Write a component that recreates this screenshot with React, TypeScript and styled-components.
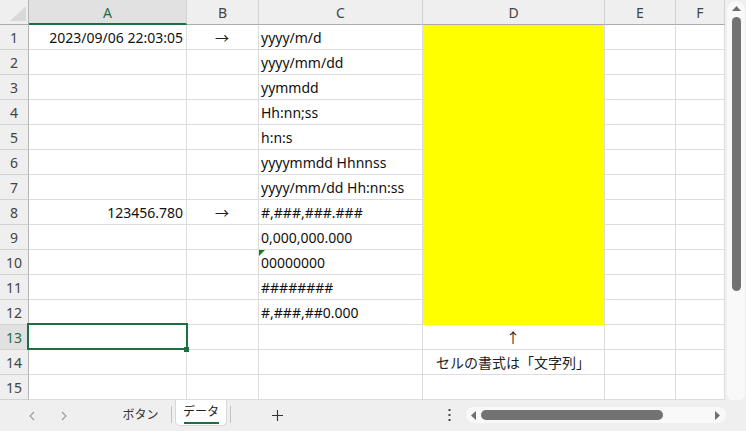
import React from 'react';
import styled, { createGlobalStyle } from 'styled-components';

const GlobalStyle = createGlobalStyle`
  html, body { margin: 0; padding: 0; background: #ffffff; }
  body { font-family: "Noto Sans", "Noto Sans CJK JP", sans-serif; }
  #root { width: 746px; height: 431px; overflow: hidden; }
`;

const GREEN = '#1e6e42';
const GRID = '#dcdcdc';
const YELLOW = '#ffff00';

const Window = styled.div`
  width: 746px;
  height: 431px;
  display: flex;
  flex-direction: column;
  background: #efefef;
  overflow: hidden;
`;

const Main = styled.div`
  display: flex;
  height: 400px;
`;

const Sheet = styled.div`
  position: relative;
  display: grid;
  grid-template-columns: 29px 158px 72px 164px 182px 71px 49px;
  grid-auto-rows: 25px;
  width: 725px;
  height: 400px;
  background: #ffffff;
  overflow: hidden;
`;

const Corner = styled.div`
  box-sizing: border-box;
  background: #efefef;
  border-right: 1px solid #b4b4b4;
  border-bottom: 1px solid #ababab;
  display: flex;
  justify-content: flex-end;
  align-items: flex-end;
  padding: 0 2px 3px 0;
`;

const ColHead = styled.div<{ $active?: boolean }>`
  box-sizing: border-box;
  background: ${p => (p.$active ? '#e1e1e1' : '#efefef')};
  color: ${p => (p.$active ? GREEN : '#444444')};
  border-right: 1px solid #d2d2d2;
  border-bottom: ${p => (p.$active ? `2px solid ${GREEN}` : '1px solid #ababab')};
  display: flex;
  align-items: center;
  justify-content: center;
  font-size: 14px;
  padding-top: ${p => (p.$active ? '1px' : '0')};
`;

const RowHead = styled.div<{ $active?: boolean }>`
  box-sizing: border-box;
  background: ${p => (p.$active ? '#e1e1e1' : '#efefef')};
  color: ${p => (p.$active ? GREEN : '#444444')};
  border-right: 1px solid #b4b4b4;
  border-bottom: 1px solid #d2d2d2;
  display: flex;
  align-items: center;
  justify-content: center;
  font-size: 14px;
`;

const Cell = styled.div<{ $align?: 'left' | 'right' | 'center'; $fill?: string }>`
  position: relative;
  box-sizing: border-box;
  background: ${p => p.$fill || '#ffffff'};
  border-right: 1px solid ${GRID};
  border-bottom: 1px solid ${p => p.$fill || GRID};
  display: flex;
  align-items: center;
  justify-content: ${p => (p.$align === 'right' ? 'flex-end' : p.$align === 'center' ? 'center' : 'flex-start')};
  padding: 0 3px 0 2px;
  font-size: 14px;
  color: #111111;
  white-space: nowrap;
`;

const Arrow = styled.span`
  font-family: "Noto Sans CJK JP", sans-serif;
  font-size: 14px;
  color: #222222;
`;

const ErrorFlag = styled.span`
  position: absolute;
  left: 0;
  top: 0;
  width: 0;
  height: 0;
  border-top: 6px solid #1d7a1d;
  border-right: 6px solid transparent;
`;

const Selection = styled.div`
  position: absolute;
  left: 27px;
  top: 323px;
  width: 161px;
  height: 27px;
  box-sizing: border-box;
  border: 2px solid ${GREEN};
  pointer-events: none;
`;

const FillHandle = styled.div`
  position: absolute;
  left: 184px;
  top: 347px;
  width: 5px;
  height: 5px;
  background: ${GREEN};
`;

const VScrollArea = styled.div`
  width: 21px;
  height: 400px;
  background: #efefef;
  box-sizing: border-box;
  padding: 1px 1px 0 2px;
`;

const VTrack = styled.div`
  height: 401px;
  border-radius: 9px;
  background: #f9f9f9;
  display: flex;
  flex-direction: column;
  align-items: center;
  padding-top: 5px;
  box-sizing: border-box;
`;

const VThumb = styled.div`
  width: 9px;
  height: 274px;
  margin-top: 6px;
  border-radius: 5px;
  background: #727272;
`;

const Spacer = styled.div`
  flex: 1;
`;

const BottomBar = styled.div`
  height: 31px;
  display: flex;
  align-items: flex-start;
  background: #efefef;
`;

const NavArea = styled.div`
  width: 110px;
  display: flex;
  padding-left: 16px;
  box-sizing: border-box;
`;

const NavButton = styled.div`
  width: 32px;
  height: 31px;
  display: flex;
  align-items: center;
  justify-content: center;
`;

const SheetTab = styled.div`
  width: 61px;
  text-align: center;
  font-family: "Noto Sans CJK JP", sans-serif;
  font-size: 12px;
  line-height: 18px;
  padding-top: 5px;
  color: #333333;
`;

const TabSep = styled.div`
  width: 1px;
  height: 17px;
  margin-top: 6px;
  background: #c4c4c4;
`;

const ActiveTab = styled.div`
  width: 52px;
  height: 26px;
  margin: 0 3px;
  box-sizing: border-box;
  background: #ffffff;
  border: 1px solid #d8d8d8;
  border-top: none;
  border-radius: 0 0 5px 5px;
  display: flex;
  flex-direction: column;
  align-items: center;
  padding-top: 2px;
`;

const ActiveLabel = styled.div`
  font-family: "Noto Sans CJK JP", sans-serif;
  font-size: 12px;
  line-height: 18px;
  color: #222222;
`;

const Underline = styled.div`
  width: 35px;
  height: 2px;
  margin-top: 2px;
  background: ${GREEN};
`;

const AddButton = styled.div`
  width: 93px;
  height: 31px;
  display: flex;
  align-items: center;
  justify-content: center;
  padding-bottom: 1px;
  box-sizing: border-box;
`;

const MoreButton = styled.div`
  width: 16px;
  height: 31px;
  margin-left: 117px;
  display: flex;
  align-items: center;
  justify-content: center;
`;

const HTrack = styled.div`
  width: 260px;
  height: 16px;
  margin: 7px 0 0 9px;
  border-radius: 8px;
  background: #f9f9f9;
  display: flex;
  align-items: center;
  padding: 0 6px 0 5px;
  box-sizing: border-box;
`;

const HThumb = styled.div`
  width: 182px;
  height: 10px;
  margin-left: 5px;
  border-radius: 5px;
  background: #727272;
`;

type Row = { a?: string; b?: string; c?: string; d?: string; flag?: boolean; yellow?: boolean };

const rows: Row[] = [
  { a: '2023/09/06 22:03:05', b: '→', c: 'yyyy/m/d', yellow: true },
  { c: 'yyyy/mm/dd', yellow: true },
  { c: 'yymmdd', yellow: true },
  { c: 'Hh:nn;ss', yellow: true },
  { c: 'h:n:s', yellow: true },
  { c: 'yyyymmdd Hhnnss', yellow: true },
  { c: 'yyyy/mm/dd Hh:nn:ss', yellow: true },
  { a: '123456.780', b: '→', c: '#,###,###.###', yellow: true },
  { c: '0,000,000.000', yellow: true },
  { c: '00000000', flag: true, yellow: true },
  { c: '########', yellow: true },
  { c: '#,###,##0.000', yellow: true },
  { d: '↑' },
  { d: 'セルの書式は「文字列」' },
  {},
];

const columns = ['A', 'B', 'C', 'D', 'E', 'F'];

const Chevron = ({ dir }: { dir: 'left' | 'right' }) => (
  <svg width="8" height="10" viewBox="0 0 8 10">
    <path
      d={dir === 'left' ? 'M6 1 L2 5 L6 9' : 'M2 1 L6 5 L2 9'}
      fill="none"
      stroke="#9a9a9a"
      strokeWidth="1.1"
    />
  </svg>
);

const Tri = ({ dir }: { dir: 'up' | 'down' | 'left' | 'right' }) => {
  const pts = {
    up: '0,5 4.5,0 9,5',
    down: '0,0 9,0 4.5,5',
    left: '5,0 5,9 0,4.5',
    right: '0,0 0,9 5,4.5',
  }[dir];
  const w = dir === 'up' || dir === 'down' ? 9 : 5;
  const h = dir === 'up' || dir === 'down' ? 5 : 9;
  return (
    <svg width={w} height={h} viewBox={`0 0 ${w} ${h}`}>
      <polygon points={pts} fill="#6e6e6e" />
    </svg>
  );
};

export default function App() {
  return (
    <>
      <GlobalStyle />
      <Window>
        <Main>
          <Sheet>
            <Corner>
              <svg width="16" height="15" viewBox="0 0 16 15">
                <polygon points="16,0 16,15 0,15" fill="#d9d9d9" />
              </svg>
            </Corner>
            {columns.map(c => (
              <ColHead key={c} $active={c === 'A'}>
                {c}
              </ColHead>
            ))}
            {rows.map((r, i) => (
              <React.Fragment key={i}>
                <RowHead $active={i === 12}>{i + 1}</RowHead>
                <Cell $align="right">{r.a}</Cell>
                <Cell $align="center">{r.b && <Arrow>{r.b}</Arrow>}</Cell>
                <Cell $align="left">
                  {r.flag && <ErrorFlag />}
                  {r.c}
                </Cell>
                <Cell $align="center" $fill={r.yellow ? YELLOW : undefined}>
                  {r.d && <Arrow>{r.d}</Arrow>}
                </Cell>
                <Cell />
                <Cell />
              </React.Fragment>
            ))}
            <Selection />
            <FillHandle />
          </Sheet>
          <VScrollArea>
            <VTrack>
              <Tri dir="up" />
              <VThumb />
              <Spacer />
            </VTrack>
          </VScrollArea>
        </Main>
        <BottomBar>
          <NavArea>
            <NavButton>
              <Chevron dir="left" />
            </NavButton>
            <NavButton>
              <Chevron dir="right" />
            </NavButton>
          </NavArea>
          <SheetTab>ボタン</SheetTab>
          <TabSep />
          <ActiveTab>
            <ActiveLabel>データ</ActiveLabel>
            <Underline />
          </ActiveTab>
          <TabSep />
          <AddButton>
            <svg width="11" height="11" viewBox="0 0 11 11">
              <path d="M5.5 0 V11 M0 5.5 H11" stroke="#333" strokeWidth="1.1" />
            </svg>
          </AddButton>
          <MoreButton>
            <svg width="3" height="13" viewBox="0 0 3 13">
              <rect x="0.5" y="0" width="2" height="2" fill="#444" />
              <rect x="0.5" y="5" width="2" height="2" fill="#444" />
              <rect x="0.5" y="10" width="2" height="2" fill="#444" />
            </svg>
          </MoreButton>
          <HTrack>
            <Tri dir="left" />
            <HThumb />
            <Spacer />
            <Tri dir="right" />
          </HTrack>
        </BottomBar>
      </Window>
    </>
  );
}
